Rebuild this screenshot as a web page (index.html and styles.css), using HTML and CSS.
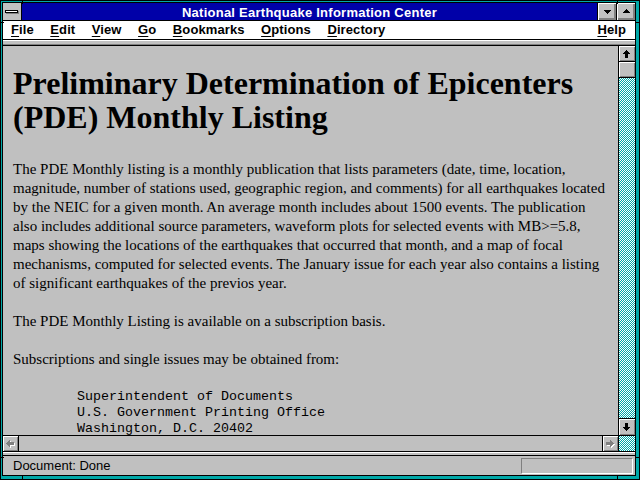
FILE: index.html
```html
<!DOCTYPE html>
<html>
<head>
<meta charset="utf-8">
<title>National Earthquake Information Center</title>
<link rel="stylesheet" href="styles.css">
</head>
<body>
<div class="window">
  <div class="inner">
    <div class="titlebar">
      <div class="sysbox"><span class="sysbar"></span></div>
      <div class="title">National Earthquake Information Center</div>
      <div class="tbtn">
        <svg width="18" height="17" viewBox="0 0 18 17" shape-rendering="crispEdges"><rect x="6" y="7" width="7" height="1"/><rect x="7" y="8" width="5" height="1"/><rect x="8" y="9" width="3" height="1"/><rect x="9" y="10" width="1" height="1"/></svg>
      </div>
      <div class="tbtn">
        <svg width="18" height="17" viewBox="0 0 18 17" shape-rendering="crispEdges"><rect x="9" y="6" width="1" height="1"/><rect x="8" y="7" width="3" height="1"/><rect x="7" y="8" width="5" height="1"/><rect x="6" y="9" width="7" height="1"/></svg>
      </div>
    </div>
    <div class="menubar">
      <span class="mi"><u>F</u>ile</span>
      <span class="mi"><u>E</u>dit</span>
      <span class="mi"><u>V</u>iew</span>
      <span class="mi"><u>G</u>o</span>
      <span class="mi"><u>B</u>ookmarks</span>
      <span class="mi"><u>O</u>ptions</span>
      <span class="mi"><u>D</u>irectory</span>
      <span class="mi help"><u>H</u>elp</span>
    </div>
    <div class="sep"></div>
    <div class="main">
      <div class="content">
        <h1 class="heading">Preliminary Determination of Epicenters (PDE) Monthly Listing</h1>
        <p class="para">The PDE Monthly listing is a monthly publication that lists parameters (date, time, location, magnitude, number of stations used, geographic region, and comments) for all earthquakes located by the NEIC for a given month. An average month includes about 1500 events. The publication also includes additional source parameters, waveform plots for selected events with MB&gt;=5.8, maps showing the locations of the earthquakes that occurred that month, and a map of focal mechanisms, computed for selected events. The January issue for each year also contains a listing of significant earthquakes of the previos year.</p>
        <p class="para">The PDE Monthly Listing is available on a subscription basis.</p>
        <p class="para">Subscriptions and single issues may be obtained from:</p>
<pre class="addr">        Superintendent of Documents
        U.S. Government Printing Office
        Washington, D.C. 20402</pre>
      </div>
      <div class="vscroll">
        <div class="sbtn vup">
          <svg width="16" height="15" viewBox="0 0 16 15" shape-rendering="crispEdges"><rect x="7" y="4" width="1" height="1"/><rect x="6" y="5" width="3" height="1"/><rect x="5" y="6" width="5" height="1"/><rect x="4" y="7" width="7" height="1"/><rect x="6" y="8" width="3" height="4"/></svg>
        </div>
        <div class="sbtn thumb"></div>
        <div class="track">
          <svg class="dither" width="16" height="400" shape-rendering="crispEdges"><defs><pattern id="dv" width="2" height="2" patternUnits="userSpaceOnUse"><rect width="2" height="2" fill="#fff"/><rect x="0" y="0" width="1" height="1" fill="#00a8a8"/><rect x="1" y="1" width="1" height="1" fill="#00a8a8"/></pattern></defs><rect width="16" height="400" fill="url(#dv)"/></svg>
        </div>
        <div class="sbtn vdown">
          <svg width="16" height="16" viewBox="0 0 16 16" shape-rendering="crispEdges"><rect x="6" y="4" width="3" height="4"/><rect x="4" y="8" width="7" height="1"/><rect x="5" y="9" width="5" height="1"/><rect x="6" y="10" width="3" height="1"/><rect x="7" y="11" width="1" height="1"/></svg>
        </div>
      </div>
    </div>
    <div class="hscroll">
      <div class="sbtn hleft">
        <svg width="15" height="15" viewBox="0 0 15 15" shape-rendering="crispEdges">
          <g class="hl" transform="translate(1,1)"><rect x="3" y="7" width="1" height="1"/><rect x="4" y="6" width="1" height="3"/><rect x="5" y="5" width="1" height="5"/><rect x="6" y="4" width="1" height="7"/><rect x="7" y="6" width="4" height="3"/></g>
          <g class="dk"><rect x="3" y="7" width="1" height="1"/><rect x="4" y="6" width="1" height="3"/><rect x="5" y="5" width="1" height="5"/><rect x="6" y="4" width="1" height="7"/><rect x="7" y="6" width="4" height="3"/></g>
        </svg>
      </div>
      <div class="htrack"></div>
      <div class="sbtn hright">
        <svg width="15" height="15" viewBox="0 0 15 15" shape-rendering="crispEdges">
          <g class="hl" transform="translate(1,1)"><rect x="3" y="6" width="4" height="3"/><rect x="7" y="4" width="1" height="7"/><rect x="8" y="5" width="1" height="5"/><rect x="9" y="6" width="1" height="3"/><rect x="10" y="7" width="1" height="1"/></g>
          <g class="dk"><rect x="3" y="6" width="4" height="3"/><rect x="7" y="4" width="1" height="7"/><rect x="8" y="5" width="1" height="5"/><rect x="9" y="6" width="1" height="3"/><rect x="10" y="7" width="1" height="1"/></g>
        </svg>
      </div>
      <div class="corner">
        <svg class="dither" width="16" height="15" shape-rendering="crispEdges"><rect width="16" height="15" fill="url(#dv)"/></svg>
      </div>
    </div>
    <div class="sep2"></div>
    <div class="status">
      <span class="stext">Document: Done</span>
      <div class="sunken"></div>
    </div>
  </div>
  <span class="tick tick-tl"></span>
  <span class="tick tick-tr"></span>
  <span class="tick tick-bl"></span>
  <span class="tick tick-br"></span>
  <span class="tick tick-lt"></span>
  <span class="tick tick-lb"></span>
  <span class="tick tick-rt"></span>
  <span class="tick tick-rb"></span>
</div>
</body>
</html>
```

FILE: styles.css
```css
html, body {
  margin: 0;
  padding: 0;
  background: #c0c0c0;
}
.window {
  position: relative;
  width: 640px;
  height: 480px;
  box-sizing: border-box;
  border: 1px solid #000;
  padding: 2px;
  background: #00a8a8;
  overflow: hidden;
}
.inner {
  width: 632px;
  height: 472px;
  border: 1px solid #000;
  box-sizing: content-box;
  margin: 0;
  display: flex;
  flex-direction: column;
  background: #c0c0c0;
  position: relative;
  left: -1px;
  top: -1px;
}
.titlebar {
  display: flex;
  height: 17px;
  border-bottom: 1px solid #000;
  flex: none;
}
.sysbox {
  width: 18px;
  height: 17px;
  background: #c0c0c0;
  border-right: 1px solid #000;
  position: relative;
  flex: none;
}
.sysbar {
  position: absolute;
  left: 2px;
  top: 7px;
  width: 11px;
  height: 1px;
  background: #fff;
  border: 1px solid #000;
  box-shadow: 1px 1px 0 #808080;
}
.title {
  flex: 1;
  background: #0000a8;
  color: #fff;
  font-family: "Liberation Sans", Arial, sans-serif;
  font-weight: bold;
  font-size: 13px;
  letter-spacing: 0.25px;
  line-height: 17px;
  padding-top: 1px;
  height: 16px;
  text-align: center;
  white-space: nowrap;
}
.tbtn {
  width: 18px;
  height: 17px;
  border-left: 1px solid #000;
  background: #c0c0c0;
  box-shadow: inset 1px 1px 0 #fff, inset -1px -1px 0 #808080, inset -2px -2px 0 #808080;
  flex: none;
}
.tbtn svg, .sbtn svg, .dither {
  display: block;
  fill: #000;
}
.menubar {
  display: flex;
  height: 18px;
  background: #fff;
  border-bottom: 1px solid #000;
  font-family: "Liberation Sans", Arial, sans-serif;
  font-weight: bold;
  font-size: 13px;
  letter-spacing: 0.1px;
  line-height: 18px;
  flex: none;
}
.mi {
  padding: 0 8.25px;
  white-space: nowrap;
}
.mi:first-child {
  padding-left: 8px;
}
.mi u {
  text-decoration-thickness: 1px;
  text-underline-offset: 2px;
}
.help {
  margin-left: auto;
  padding-right: 9px;
}
.sep {
  height: 3px;
  flex: none;
  background: #c0c0c0;
  border-top: 1px solid #fff;
  border-bottom: 1px solid #808080;
  box-shadow: 0 1px 0 #000;
  margin-bottom: 1px;
}
.main {
  display: flex;
  height: 389px;
  flex: none;
}
.content {
  flex: 1;
  overflow: hidden;
  padding: 20px 13px 0 10px;
  color: #000;
}
.heading {
  margin: 0 0 26px;
  font-family: "Liberation Serif", "Times New Roman", serif;
  font-weight: bold;
  font-size: 32px;
  line-height: 34px;
  margin-right: -10px;
}
.para {
  margin: 0 0 19px;
  font-family: "Liberation Serif", "Times New Roman", serif;
  font-size: 15px;
  line-height: 19px;
}
.addr {
  margin: 20px 0 0;
  font-family: "Liberation Mono", "Courier New", monospace;
  font-size: 13.333px;
  line-height: 16px;
}
.vscroll {
  width: 16px;
  border-left: 1px solid #000;
  display: flex;
  flex-direction: column;
  flex: none;
}
.sbtn {
  background: #c0c0c0;
  box-shadow: inset 1px 1px 0 #fff, inset -1px -1px 0 #808080;
  flex: none;
}
.vup {
  height: 15px;
  border-bottom: 1px solid #000;
}
.thumb {
  height: 15px;
  border-bottom: 1px solid #000;
}
.track {
  flex: 1;
  overflow: hidden;
  background: #fff;
}
.vdown {
  height: 16px;
  border-top: 1px solid #000;
}
.hscroll {
  display: flex;
  height: 15px;
  border-top: 1px solid #000;
  border-bottom: 1px solid #000;
  flex: none;
}
.hleft {
  width: 15px;
  border-right: 1px solid #000;
}
.htrack {
  flex: 1;
  background: #c0c0c0;
}
.hright {
  width: 15px;
  border-left: 1px solid #000;
}
.hleft svg .dk, .hright svg .dk {
  fill: #808080;
}
.hleft svg .hl, .hright svg .hl {
  fill: #fff;
}
.corner {
  width: 16px;
  border-left: 1px solid #000;
  overflow: hidden;
  background: #fff;
  flex: none;
}
.sep2 {
  height: 2px;
  flex: none;
  background: #c0c0c0;
  border-top: 1px solid #fff;
  border-bottom: 1px solid #000;
}
.status {
  display: flex;
  align-items: flex-start;
  height: 19px;
  flex: none;
  background: #c0c0c0;
  font-family: "Liberation Sans", Arial, sans-serif;
  font-size: 13px;
  line-height: 19px;
}
.stext {
  padding-left: 10px;
  flex: 1;
  white-space: nowrap;
}
.sunken {
  width: 112px;
  height: 16px;
  box-sizing: border-box;
  margin: 2px 2px 0 0;
  border-top: 1px solid #808080;
  border-left: 1px solid #808080;
  border-bottom: 1px solid #fff;
  border-right: 1px solid #fff;
}
.tick {
  position: absolute;
  background: #000;
}
.tick-tl { left: 21px; top: -1px; width: 1px; height: 4px; }
.tick-tr { left: 616px; top: -1px; width: 1px; height: 4px; }
.tick-bl { left: 21px; top: 475px; width: 1px; height: 4px; }
.tick-br { left: 616px; top: 475px; width: 1px; height: 4px; }
.tick-lt { left: -1px; top: 21px; width: 4px; height: 1px; }
.tick-lb { left: -1px; top: 456px; width: 4px; height: 1px; }
.tick-rt { left: 635px; top: 21px; width: 4px; height: 1px; }
.tick-rb { left: 635px; top: 456px; width: 4px; height: 1px; }
```
